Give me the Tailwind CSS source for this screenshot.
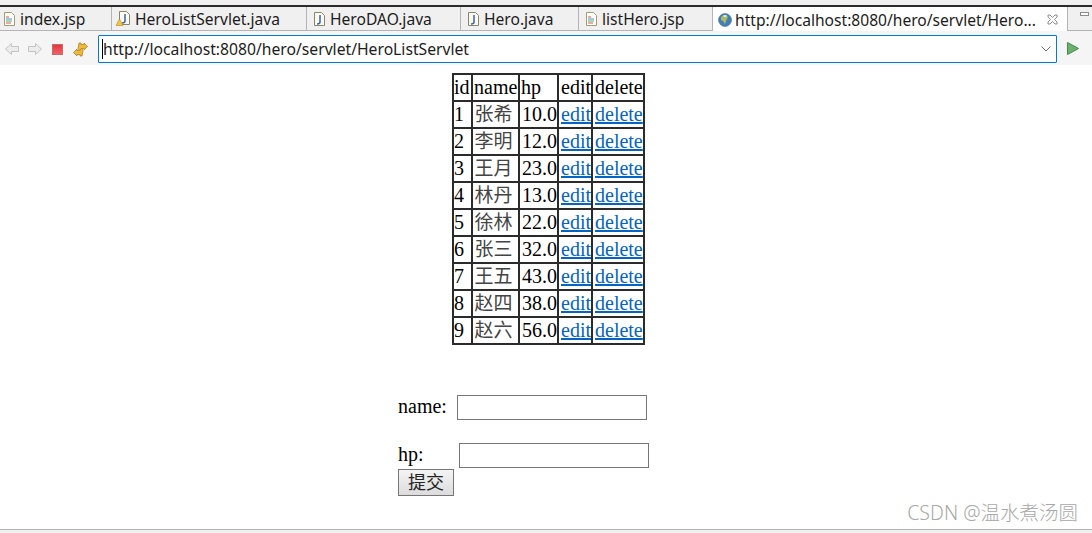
<!DOCTYPE html>
<html lang="en">
<head>
  <meta charset="UTF-8" />
  <title>Hero list</title>
  <script src="https://cdn.jsdelivr.net/npm/@tailwindcss/browser@4"></script>
</head>
<body class="w-[1092px] h-[533px] overflow-hidden bg-white flex flex-col font-['Liberation_Serif','Noto_Sans_CJK_SC',serif] text-[20px] leading-[23px] text-black">

  <!-- Editor tabs -->
  <div class="h-[31px] shrink-0 bg-[#f0f0f0] pt-[5px]">
    <div class="h-[26px] border-t-2 border-[#2b2b2b] flex font-['Noto_Sans',sans-serif] text-[15.6px] leading-[22px] text-[#1c1c1c]">
      <div class="w-[112px] h-[24px] border-r border-b border-[#b4b4b4] flex items-center pl-[3px] gap-[4px]">
        <svg class="w-[13px] h-[16px]" viewBox="0 0 13 16"><path d="M1.500 1.500h7l3 3v10h-10z" fill="#fff" stroke="#a89a70"/><path d="M3 6h3" stroke="#d0574c"/><path d="M3 8h6" stroke="#3f8fd0"/><path d="M3 10h6" stroke="#58a860"/><path d="M3 12h5" stroke="#d0574c"/></svg>
        <span>index.jsp</span>
      </div>
      <div class="w-[195px] h-[24px] border-r border-b border-[#b4b4b4] flex items-center pl-[4px] gap-[3px]">
        <svg class="w-[15px] h-[17px]" viewBox="0 0 15 17"><path d="M3.500 1.500h7l3 3v10h-10z" fill="#fbfaf3" stroke="#8a8468"/><path d="M9 4v7q0 2-3 2" fill="none" stroke="#3c63a8" stroke-width="1.500"/><path d="M3.500 9l3.500 6.500h-7z" fill="#f5c33d" stroke="#b8871c" stroke-width=".6"/></svg>
        <span class="ml-[1px]">HeroListServlet.java</span>
      </div>
      <div class="w-[154px] h-[24px] border-r border-b border-[#b4b4b4] flex items-center pl-[6px] gap-[4px]">
        <svg class="w-[13px] h-[16px]" viewBox="0 0 13 16"><path d="M1.500 1.500h7l3 3v10h-10z" fill="#fbfaf3" stroke="#8a8468"/><path d="M7 4v7q0 2-3 2" fill="none" stroke="#3c63a8" stroke-width="1.500"/></svg>
        <span>HeroDAO.java</span>
      </div>
      <div class="w-[118px] h-[24px] border-r border-b border-[#b4b4b4] flex items-center pl-[6px] gap-[4px]">
        <svg class="w-[13px] h-[16px]" viewBox="0 0 13 16"><path d="M1.500 1.500h7l3 3v10h-10z" fill="#fbfaf3" stroke="#8a8468"/><path d="M7 4v7q0 2-3 2" fill="none" stroke="#3c63a8" stroke-width="1.500"/></svg>
        <span>Hero.java</span>
      </div>
      <div class="w-[134px] h-[24px] border-r border-b border-[#b4b4b4] flex items-center pl-[6px] gap-[4px]">
        <svg class="w-[13px] h-[16px]" viewBox="0 0 13 16"><path d="M1.500 1.500h7l3 3v10h-10z" fill="#fff" stroke="#a89a70"/><path d="M3 6h3" stroke="#d0574c"/><path d="M3 8h6" stroke="#3f8fd0"/><path d="M3 10h6" stroke="#58a860"/><path d="M3 12h5" stroke="#d0574c"/></svg>
        <span>listHero.jsp</span>
      </div>
      <div class="w-[355px] h-[25px] bg-white border-r border-[#b4b4b4] flex items-center pl-[5px]">
        <svg class="w-[14px] h-[14px]" viewBox="0 0 14 14"><circle cx="7" cy="7" r="6.500" fill="#3f7fb8" stroke="#5a6a78" stroke-width=".6"/><path d="M3 4q2-2 5-2l2 2-2 4-1 3-2-3-2-1z" fill="#b0b860"/><path d="M5 2.500q2-1 4 0l-1 1.500H6z" fill="#dfe8ee"/></svg>
        <span class="ml-[3px]">http://localhost:8080/hero/servlet/Hero...</span>
        <svg class="w-[11px] h-[11px] ml-[11px]" viewBox="0 0 11 11"><path d="M1 1h2l2.500 2.500L8 1h2v2L7.500 5.500 10 8v2H8L5.500 7.500 3 10H1V8l2.500-2.500L1 3z" fill="#fff" stroke="#8c8c8c"/></svg>
      </div>
      <div class="flex-1 h-[24px] border-b border-[#b4b4b4] flex items-start pl-[12px] pt-[5px]">
        <div class="w-[9px] h-[4px] border border-[#8c8c8c] bg-white"></div>
      </div>
    </div>
  </div>

  <!-- Browser toolbar -->
  <div class="h-[34px] shrink-0 bg-[#f5f5f5] flex items-start pl-[5px] pt-[4px]">
    <svg class="w-[14px] h-[12px] mt-[8px]" viewBox="0 0 14 12"><path d="M6.500.5v3h7v5h-7v3L.5 6z" fill="#ececec" stroke="#c4c4c4"/></svg>
    <svg class="w-[14px] h-[12px] mt-[8px] ml-[9px]" viewBox="0 0 14 12"><path d="M7.500.5v3h-7v5h7v3l6-5.500z" fill="#ececec" stroke="#c4c4c4"/></svg>
    <div class="w-[11px] h-[11px] mt-[9px] ml-[10px] bg-linear-to-b from-[#e8323c] to-[#f0606a] border border-[#c46a6a]"></div>
    <svg class="w-[15px] h-[15px] mt-[7px] ml-[10px]" viewBox="0 0 15 15"><path d="M6 1h2v1.500h3V1l3.500 3.500L11 8V6.500H8.500L6.500 8.500 5 6.500z" fill="#eeb83a" stroke="#a87818" stroke-width=".7"/><path d="M9 14H7v-1.500H4V14L.5 10.500 4 7v1.500h2.500l2-2L10 8.500z" fill="#eeb83a" stroke="#a87818" stroke-width=".7"/></svg>
    <div class="w-[959px] h-[28px] ml-[10px] bg-white border-[1.500px] border-[#0078d7] rounded-[1px] flex items-center pl-[3px] font-['Noto_Sans',sans-serif] text-[15.7px] text-[#1c1c1c]">
      <span class="border-l border-black leading-[20px]">http://localhost:8080/hero/servlet/HeroListServlet</span>
      <svg class="w-[10px] h-[6px] ml-auto mr-[5px]" viewBox="0 0 10 6"><path d="M.5.500L5 5 9.500.5" fill="none" stroke="#6e6e6e"/></svg>
    </div>
    <svg class="w-[12px] h-[13px] mt-[7px] ml-[10px]" viewBox="0 0 12 13"><path d="M.5.500l11 6-11 6z" fill="#6cb26c" stroke="#3f8a50"/></svg>
  </div>

  <!-- Page -->
  <main class="relative flex-1 flex flex-col">
    <table class="ml-[452px] mt-[8px] w-[191px] table-fixed border-collapse border-2 border-[#2b2b2b]">
      <colgroup>
        <col class="w-[19px]" /><col class="w-[47px]" /><col class="w-[39px]" /><col class="w-[34px]" /><col class="w-[52px]" />
      </colgroup>
      <tbody class="[&_td]:border-2 [&_td]:border-[#2b2b2b] [&_td]:h-[27px] [&_td]:px-[1px] [&_td]:whitespace-nowrap [&_td:first-child]:pl-0 [&_td:nth-child(2)]:pr-[5px] [&_td:nth-child(3)]:pr-0 [&_td:nth-child(n+4)]:pl-[2px] [&_a]:text-[#0563c1] [&_a]:underline">
        <tr><td>id</td><td>name</td><td>hp</td><td>edit</td><td>delete</td></tr>
        <tr><td>1</td><td class="text-center text-[19px] text-[#444]">张希</td><td class="text-right">10.0</td><td><a href="#">edit</a></td><td><a href="#">delete</a></td></tr>
        <tr><td>2</td><td class="text-center text-[19px] text-[#444]">李明</td><td class="text-right">12.0</td><td><a href="#">edit</a></td><td><a href="#">delete</a></td></tr>
        <tr><td>3</td><td class="text-center text-[19px] text-[#444]">王月</td><td class="text-right">23.0</td><td><a href="#">edit</a></td><td><a href="#">delete</a></td></tr>
        <tr><td>4</td><td class="text-center text-[19px] text-[#444]">林丹</td><td class="text-right">13.0</td><td><a href="#">edit</a></td><td><a href="#">delete</a></td></tr>
        <tr><td>5</td><td class="text-center text-[19px] text-[#444]">徐林</td><td class="text-right">22.0</td><td><a href="#">edit</a></td><td><a href="#">delete</a></td></tr>
        <tr><td>6</td><td class="text-center text-[19px] text-[#444]">张三</td><td class="text-right">32.0</td><td><a href="#">edit</a></td><td><a href="#">delete</a></td></tr>
        <tr><td>7</td><td class="text-center text-[19px] text-[#444]">王五</td><td class="text-right">43.0</td><td><a href="#">edit</a></td><td><a href="#">delete</a></td></tr>
        <tr><td>8</td><td class="text-center text-[19px] text-[#444]">赵四</td><td class="text-right">38.0</td><td><a href="#">edit</a></td><td><a href="#">delete</a></td></tr>
        <tr><td>9</td><td class="text-center text-[19px] text-[#444]">赵六</td><td class="text-right">56.0</td><td><a href="#">edit</a></td><td><a href="#">delete</a></td></tr>
      </tbody>
    </table>

    <form class="ml-[398px] mt-[50px] flex flex-col items-start">
      <label class="flex items-center h-[24px]"><span class="-mt-[2px]">name:</span><input type="text" class="ml-[10px] w-[190px] h-[25px] border border-[#767676] bg-white" /></label>
      <label class="flex items-center h-[24px] mt-[24px]"><span class="w-[61px] -mt-[2px]">hp:</span><input type="text" class="w-[190px] h-[25px] border border-[#767676] bg-white" /></label>
      <button type="button" class="w-[56px] h-[27px] mt-[2px] border border-[#767676] bg-linear-to-b from-[#f4f4f4] to-[#dcdcdc] text-[18px] leading-[24px] text-[#222]">提交</button>
    </form>

    <span class="absolute right-[14px] bottom-[8px] font-['Noto_Sans','Noto_Sans_CJK_SC',sans-serif] font-light text-[19.5px] leading-[24px] text-[#a8a8a8]">CSDN @温水煮汤圆</span>
    <div class="absolute left-0 right-0 bottom-0 h-[4px] bg-[#f0f0f0] border-t border-[#b4b4b4]"></div>
  </main>
</body>
</html>
